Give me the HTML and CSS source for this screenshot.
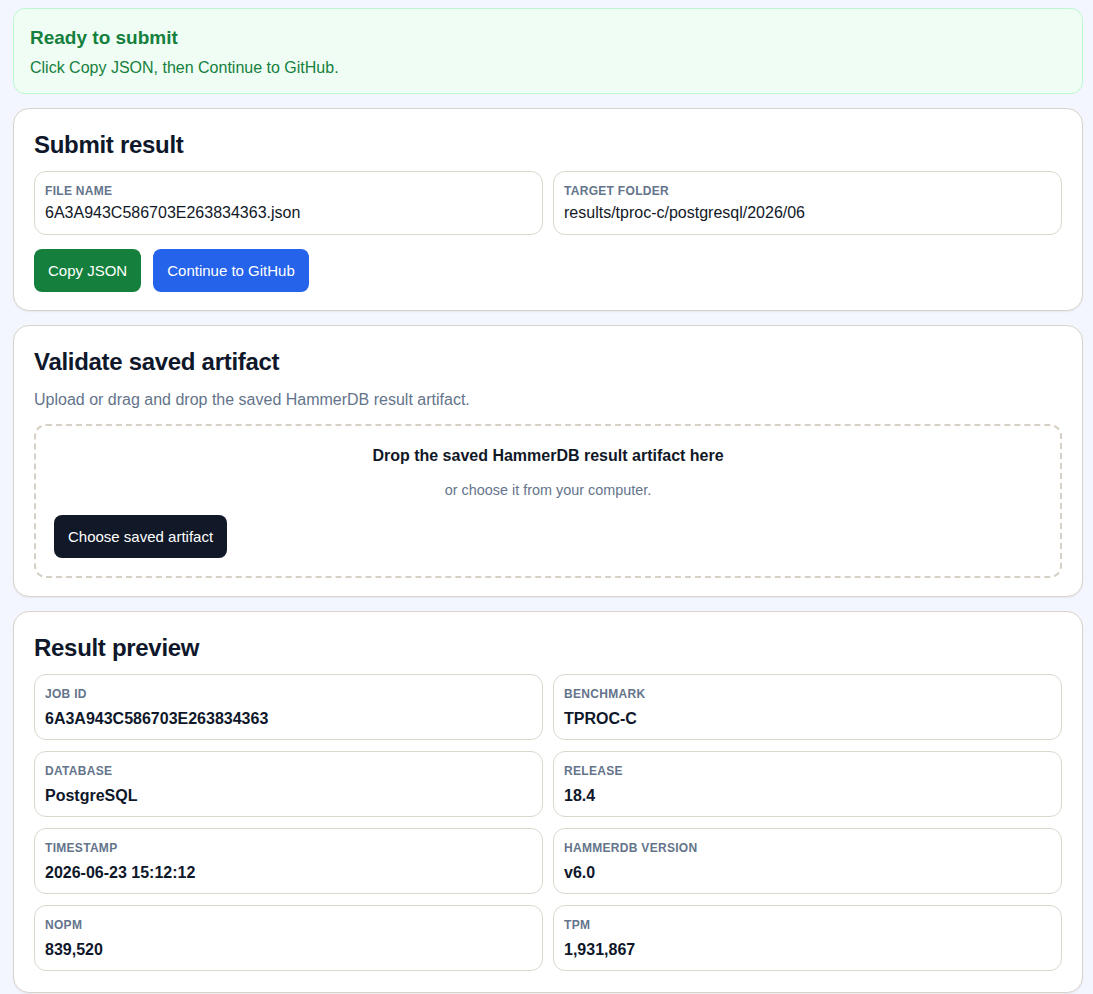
FILE: index.html
```html
<!DOCTYPE html>
<html lang="en">
<head>
<meta charset="utf-8">
<title>Submit result</title>
<link rel="stylesheet" href="styles.css">
</head>
<body>
<main class="page">
  <section class="alert">
    <h2 class="alert-title">Ready to submit</h2>
    <p class="alert-text">Click Copy JSON, then Continue to GitHub.</p>
  </section>

  <section class="card">
    <h2 class="card-title">Submit result</h2>
    <div class="grid">
      <div class="field">
        <div class="label">File name</div>
        <div class="value">6A3A943C586703E263834363.json</div>
      </div>
      <div class="field">
        <div class="label">Target folder</div>
        <div class="value">results/tproc-c/postgresql/2026/06</div>
      </div>
    </div>
    <div class="actions">
      <button class="btn btn-green">Copy JSON</button>
      <button class="btn btn-blue">Continue to GitHub</button>
    </div>
  </section>

  <section class="card card-validate">
    <h2 class="card-title">Validate saved artifact</h2>
    <p class="muted">Upload or drag and drop the saved HammerDB result artifact.</p>
    <div class="dropzone">
      <p class="drop-title">Drop the saved HammerDB result artifact here</p>
      <p class="drop-sub">or choose it from your computer.</p>
      <button class="btn btn-dark">Choose saved artifact</button>
    </div>
  </section>

  <section class="card card-preview">
    <h2 class="card-title">Result preview</h2>
    <div class="grid">
      <div class="field stat"><div class="label">Job ID</div><div class="value strong">6A3A943C586703E263834363</div></div>
      <div class="field stat"><div class="label">Benchmark</div><div class="value strong">TPROC-C</div></div>
      <div class="field stat"><div class="label">Database</div><div class="value strong">PostgreSQL</div></div>
      <div class="field stat"><div class="label">Release</div><div class="value strong">18.4</div></div>
      <div class="field stat"><div class="label">Timestamp</div><div class="value strong">2026-06-23 15:12:12</div></div>
      <div class="field stat"><div class="label">HammerDB version</div><div class="value strong">v6.0</div></div>
      <div class="field stat"><div class="label">NOPM</div><div class="value strong">839,520</div></div>
      <div class="field stat"><div class="label">TPM</div><div class="value strong">1,931,867</div></div>
    </div>
  </section>
</main>
</body>
</html>
```

FILE: styles.css
```css
* { box-sizing: border-box; }

html, body {
  margin: 0;
  background: #f3f6fe;
}

body {
  font-family: "Liberation Sans", Arial, sans-serif;
  color: #111827;
}

.page {
  padding: 8px 10px 20px 13px;
  display: flex;
  flex-direction: column;
  gap: 14px;
}

.alert {
  background: #effdf4;
  border: 1px solid #bbf7d0;
  border-radius: 12px;
  padding: 17px 16px 15px;
  color: #15803d;
}

.alert-title {
  margin: 0;
  font-size: 19px;
  font-weight: 700;
  line-height: 24px;
}

.alert-text {
  margin: 8px 0 0;
  font-size: 16px;
  line-height: 20px;
}

.card {
  background: #ffffff;
  border: 1px solid #d9d4ca;
  border-radius: 16px;
  padding: 21px 20px 18px;
  box-shadow: 0 1px 2px rgba(15, 23, 42, 0.06);
}

.card-validate { padding-bottom: 18px; }
.card-preview { padding-bottom: 21px; }

.card-title {
  margin: 0 0 11px;
  font-size: 24px;
  line-height: 30px;
  font-weight: 700;
  color: #0f172a;
  letter-spacing: -0.3px;
}

.grid {
  display: grid;
  grid-template-columns: 1fr 1fr;
  gap: 11px 10px;
}

.field {
  border: 1px solid #dcd7cc;
  border-radius: 12px;
  padding: 12px 10px 11px;
}

.label {
  font-size: 12px;
  line-height: 15px;
  font-weight: 700;
  text-transform: uppercase;
  letter-spacing: 0.3px;
  color: #64748b;
}

.value {
  margin-top: 4px;
  font-size: 16px;
  line-height: 20px;
  color: #111827;
}

.stat {
  padding: 12px 10px 10px;
}

.value.strong {
  font-weight: 700;
  margin-top: 7px;
  color: #0f172a;
}

.actions {
  display: flex;
  gap: 12px;
  margin-top: 14px;
}

.btn {
  font-family: "Liberation Sans", Arial, sans-serif;
  font-size: 15px;
  line-height: 19px;
  border: 0;
  border-radius: 8px;
  padding: 12px 14px;
  color: #ffffff;
  cursor: pointer;
}

.btn-green { background: #15803d; }
.btn-blue { background: #2563eb; }
.btn-dark { background: #111827; }

.muted {
  margin: 13px 0 14px;
  font-size: 16px;
  line-height: 20px;
  color: #64748b;
}

.dropzone {
  border: 2px dashed #d6d0c6;
  border-radius: 12px;
  padding: 20px 18px 18px;
  display: flex;
  flex-direction: column;
  align-items: flex-start;
}

.drop-title {
  align-self: stretch;
  text-align: center;
  margin: 0;
  font-size: 16px;
  line-height: 20px;
  font-weight: 700;
  color: #111827;
}

.drop-sub {
  align-self: stretch;
  text-align: center;
  margin: 15px 0 16px;
  font-size: 14.4px;
  line-height: 18px;
  color: #64748b;
}
```
